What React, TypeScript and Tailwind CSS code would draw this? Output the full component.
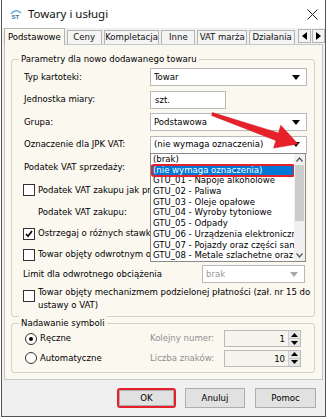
import React from 'react';

const F = "font-['DejaVu_Sans_Condensed','DejaVu_Sans',sans-serif] font-stretch-condensed";

const Arrow = ({ disabled }: { disabled?: boolean }) => (
    <svg width="8" height="5" viewBox="0 0 8 5"><path d="M0 0h8L4 5z" fill={disabled ? '#a8a8a8' : '#000'} /></svg>
);

const Combo = ({ value, className = '', disabled }: { value: string; className?: string; disabled?: boolean }) => (
    <div className={`h-[18px] bg-white border border-[#b9b9b9] flex items-center pl-[3px] pr-[6px] ${className}`}>
        <span className={`flex-1 truncate ${disabled ? 'text-[#9a9a9a]' : 'text-black'}`}>{value}</span>
        <Arrow disabled={disabled} />
    </div>
);

const Check = ({ checked }: { checked?: boolean }) => (
    <div className="w-[12px] h-[12px] border border-[#333] bg-white flex items-center justify-center shrink-0">
        {checked && (
            <svg width="8" height="8" viewBox="0 0 8 8"><path d="M1 4l2 2.2L7 1" fill="none" stroke="#000" strokeWidth="1.6" /></svg>
        )}
    </div>
);

const Radio = ({ on }: { on?: boolean }) => (
    <div className="w-[12px] h-[12px] rounded-full border border-[#333] bg-white flex items-center justify-center shrink-0">
        {on && <div className="w-[4px] h-[4px] rounded-full bg-black" />}
    </div>
);

const Spinner = ({ value }: { value: string }) => (
    <div className="w-[77px] h-[17px] border border-[#b9b9b9] bg-[#f6f4ef] flex">
        <span className="flex-1 text-right pr-[3px] leading-[15px] text-black">{value}</span>
        <div className="w-[12px] flex flex-col border-l border-[#d0d0d0]">
            <div className="flex-1 bg-[#e6e6e6] flex items-center justify-center border-b border-[#c8c8c8]">
                <svg width="7" height="4" viewBox="0 0 7 4"><path d="M0 4h7L3.5 0z" fill="#000" /></svg>
            </div>
            <div className="flex-1 bg-[#e6e6e6] flex items-center justify-center">
                <svg width="7" height="4" viewBox="0 0 7 4"><path d="M0 0h7L3.5 4z" fill="#000" /></svg>
            </div>
        </div>
    </div>
);

const Tab = ({ label, active, w }: { label: string; active?: boolean; w: string }) => (
    <div className={`${w} border-x border-t border-[#b4b4b4] flex items-center justify-center whitespace-nowrap ${active ? 'h-[17px] bg-[#fbf8f0] relative z-10 -mb-[1px]' : 'h-[14px] bg-[#f4f4f4] text-[#111]'}`}>
        {label}
    </div>
);

const gtu = [
    '(brak)',
    '(nie wymaga oznaczenia)',
    'GTU_01 - Napoje alkoholowe',
    'GTU_02 - Paliwa',
    'GTU_03 - Oleje opałowe',
    'GTU_04 - Wyroby tytoniowe',
    'GTU_05 - Odpady',
    'GTU_06 - Urządzenia elektroniczne',
    'GTU_07 - Pojazdy oraz części samochodowe',
    'GTU_08 - Metale szlachetne oraz nieszlachetne',
];

export default function App() {
    return (
        <div className={`w-[328px] h-[420px] bg-white relative overflow-hidden text-[9.5px] text-black ${F}`}>
            {/* window */}
            <div className="ml-[1px] w-[325px] h-[417px] border-x border-b border-[#555] flex flex-col">
                {/* title bar */}
                <div className="h-[28px] bg-white flex items-center pl-[8px] pr-[7px] shrink-0">
                    <svg width="12" height="10" viewBox="0 0 12 10">
                        <path d="M1 5 Q6 -1 11 4" fill="none" stroke="#6aa8d8" strokeWidth="1.6" />
                        <text x="1.5" y="9.6" fontSize="6" fontWeight="bold" fill="#3b6f9e" fontFamily="Liberation Sans">ST</text>
                    </svg>
                    <span className="ml-[6px] text-[11.5px] font-['Noto_Sans',sans-serif] font-stretch-normal text-[#111] flex-1">Towary i usługi</span>
                    <svg width="11" height="11" viewBox="0 0 11 11"><path d="M0.5 0.5l10 10M10.5 0.5l-10 10" stroke="#222" strokeWidth="1" /></svg>
                </div>
                {/* body */}
                <div className="flex-1 bg-[#f0f0f0] flex flex-col">
                    {/* tabs */}
                    <div className="h-[16px] flex items-end pl-[2px] gap-[2px] shrink-0">
                        <Tab label="Podstawowe" active w="w-[61px]" />
                        <Tab label="Ceny" w="w-[35px]" />
                        <Tab label="Kompletacja" w="w-[56px]" />
                        <Tab label="Inne" w="w-[34px]" />
                        <Tab label="VAT marża" w="w-[50px]" />
                        <Tab label="Działania" w="w-[46px]" />
                        <div className="flex ml-[1px] mb-[1px]">
                            <div className="w-[13px] h-[14px] border border-[#b4b4b4] bg-[#f4f4f4] flex items-center justify-center">
                                <svg width="5" height="8" viewBox="0 0 5 8"><path d="M5 0v8L0 4z" fill="#000" /></svg>
                            </div>
                            <div className="w-[13px] h-[14px] border border-[#b4b4b4] bg-[#f4f4f4] flex items-center justify-center ml-[1px]">
                                <svg width="5" height="8" viewBox="0 0 5 8"><path d="M0 0v8L5 4z" fill="#000" /></svg>
                            </div>
                        </div>
                    </div>
                    {/* panel */}
                    <div className="mx-[2px] h-[336px] bg-[#fbf8f0] border border-[#c6c6c6] shrink-0 pl-[6px] pr-[7px] pt-[14px] flex flex-col">
                        {/* group 1 */}
                        <div className="relative h-[258px] border border-[#d6d1c6] rounded-[3px] pl-[12px] pr-[7px] pt-[6px] flex flex-col">
                            <span className="absolute -top-[8px] left-[7px] bg-[#fbf8f0] px-[2px]">Parametry dla nowo dodawanego towaru</span>
                            <div className="h-[22px] flex items-center">
                                <span className="w-[126px]">Typ kartoteki:</span>
                                <Combo value="Towar" className="flex-1" />
                            </div>
                            <div className="h-[23px] flex items-center">
                                <span className="w-[126px]">Jednostka miary:</span>
                                <div className="w-[76px] h-[18px] bg-white border border-[#b9b9b9] pl-[4px] leading-[16px]">szt.</div>
                            </div>
                            <div className="h-[22px] flex items-center">
                                <span className="w-[126px]">Grupa:</span>
                                <Combo value="Podstawowa" className="flex-1" />
                            </div>
                            <div className="h-[23px] flex items-center">
                                <span className="w-[126px]">Oznaczenie dla JPK VAT:</span>
                                <Combo value="(nie wymaga oznaczenia)" className="flex-1" />
                            </div>
                            <div className="h-[22px] flex items-center">
                                <span className="w-[126px]">Podatek VAT sprzedaży:</span>
                            </div>
                            <div className="h-[24px] flex items-center gap-[3px] -ml-[1px]">
                                <Check />
                                <span className="whitespace-nowrap">Podatek VAT zakupu jak przy sprzedaży</span>
                            </div>
                            <div className="h-[21px] flex items-center pl-[14px]">Podatek VAT zakupu:</div>
                            <div className="h-[21px] flex items-center gap-[3px] -ml-[1px]">
                                <Check checked />
                                <span className="whitespace-nowrap">Ostrzegaj o różnych stawkach VAT</span>
                            </div>
                            <div className="h-[21px] flex items-center gap-[3px] -ml-[1px]">
                                <Check />
                                <span className="whitespace-nowrap">Towar objęty odwrotnym obciążeniem</span>
                            </div>
                            <div className="h-[18px] flex items-center">
                                <span className="w-[179px] -ml-[1px]">Limit dla odwrotnego obciążenia</span>
                                <Combo value="brak" disabled className="flex-1 mr-[2px] h-[17px] bg-[#fbf8f0]" />
                            </div>
                            <div className="flex gap-[3px] -ml-[1px] pt-[2px]">
                                <div className="pt-[5px]"><Check /></div>
                                <span className="leading-[13px] whitespace-nowrap">
                                    Towar objęty mechanizmem podzielonej płatności (zał. nr 15 do
                                    <br />
                                    ustawy o VAT)
                                </span>
                            </div>
                        </div>
                        {/* group 2 */}
                        <div className="relative mt-[6px] h-[50px] border border-[#d6d1c6] rounded-[3px] pl-[13px] pr-[12px] pt-[5px] flex flex-col">
                            <span className="absolute -top-[8px] left-[7px] bg-[#fbf8f0] px-[2px]">Nadawanie symboli</span>
                            <div className="h-[19px] flex items-center">
                                <Radio on />
                                <span className="ml-[3px] w-[110px]">Ręczne</span>
                                <span className="w-[74px] text-[#8f8f8f] whitespace-nowrap">Kolejny numer:</span>
                                <Spinner value="1" />
                            </div>
                            <div className="h-[20px] flex items-center">
                                <Radio />
                                <span className="ml-[3px] w-[110px]">Automatyczne</span>
                                <span className="w-[74px] text-[#8f8f8f] whitespace-nowrap">Liczba znaków:</span>
                                <Spinner value="10" />
                            </div>
                        </div>
                    </div>
                    {/* buttons */}
                    <div className="flex pl-[115px] pt-[8px] gap-[9px]">
                        <div className="w-[59px] h-[20px] rounded-[3px] border-2 border-[#e5202a] flex">
                            <div className="flex-1 bg-[#e1e1e1] border border-[#adadad] flex items-center justify-center">OK</div>
                        </div>
                        <div className="w-[60px] h-[20px] bg-[#e1e1e1] border border-[#adadad] flex items-center justify-center">Anuluj</div>
                        <div className="w-[61px] h-[20px] bg-[#e1e1e1] border border-[#adadad] flex items-center justify-center ml-[1px]">Pomoc</div>
                    </div>
                </div>
            </div>

            {/* open dropdown list */}
            <div className="absolute left-[150px] top-[153px] w-[156px] h-[109px] bg-white border border-[#8a8a8a] flex">
                <div className="flex-1 overflow-hidden relative">
                    {gtu.map((t, i) => (
                        <div key={t} className={`h-[10.7px] leading-[10.7px] pl-[2px] whitespace-nowrap ${i === 1 ? 'bg-[#0078d7] text-white' : ''}`}>{t}</div>
                    ))}
                    <div className="absolute left-0 top-[10px] w-[144px] h-[13px] rounded-[3px] border-2 border-[#e5202a]" />
                </div>
                <div className="w-[11px] bg-[#f0f0f0] flex flex-col">
                    <div className="h-[11px] flex items-center justify-center">
                        <svg width="7" height="5" viewBox="0 0 7 5"><path d="M0.5 4.5L3.5 1l3 3.5" fill="none" stroke="#555" strokeWidth="1.2" /></svg>
                    </div>
                    <div className="h-[56px] mx-[1px] bg-[#cdcdcd]" />
                    <div className="flex-1" />
                    <div className="h-[11px] flex items-center justify-center">
                        <svg width="7" height="5" viewBox="0 0 7 5"><path d="M0.5 0.5L3.5 4l3-3.5" fill="none" stroke="#555" strokeWidth="1.2" /></svg>
                    </div>
                </div>
            </div>

            {/* red annotation arrow */}
            <svg className="absolute left-0 top-0 pointer-events-none" width="328" height="420" viewBox="0 0 328 420">
                <polygon points="212.5,112.6 278.5,132.9 280.8,125.3 298,144 273.6,148.1 275.9,140.5 211.5,115.4" fill="#e8202a" stroke="#c81820" strokeWidth="0.5" />
            </svg>
        </div>
    );
}
